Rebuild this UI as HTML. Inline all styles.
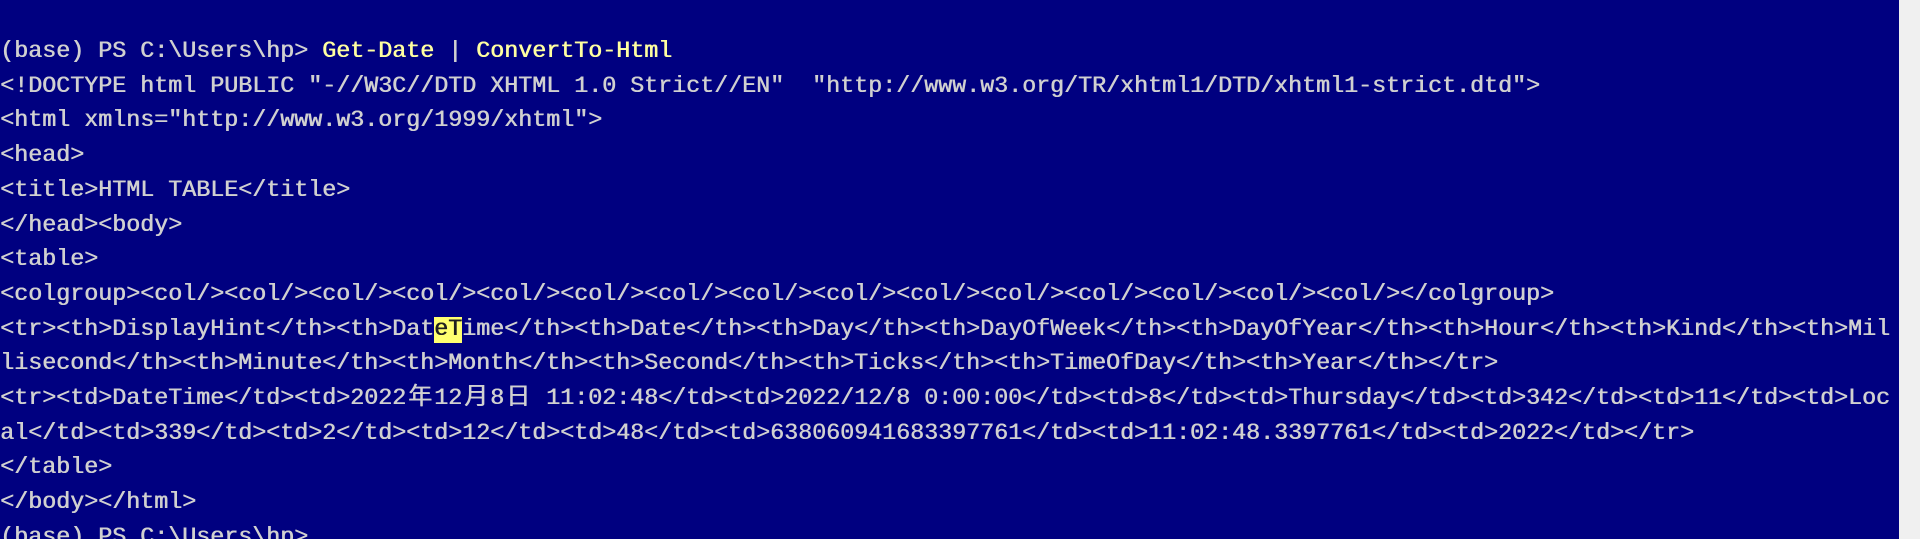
<!DOCTYPE html>
<html><head><meta charset="utf-8"><style>
html,body{margin:0;padding:0;width:1920px;height:539px;overflow:hidden;background:#f0f0f0}
#t{position:absolute;left:0;top:0;width:1899px;height:539px;background:#000080;overflow:hidden}
pre{margin:0;position:absolute;left:0;top:35px;font-family:"Liberation Mono","Noto Sans CJK SC",monospace;font-size:23.33px;line-height:34.7px;color:#d0d0d0;white-space:pre;text-shadow:0.6px 0 0 currentColor}
.y{color:#ffffa0}
.c{display:inline-block;width:28px;font-family:"Noto Sans CJK SC",sans-serif;font-size:24px;text-align:center;line-height:20px}
.h{background:#ffff70;color:#202020}
</style></head><body><div id="t"><pre>(base) PS C:\Users\hp&gt; <span class="y">Get-Date</span> | <span class="y">ConvertTo-Html</span>
&lt;!DOCTYPE html PUBLIC "-//W3C//DTD XHTML 1.0 Strict//EN"  "http://www.w3.org/TR/xhtml1/DTD/xhtml1-strict.dtd"&gt;
&lt;html xmlns="http://www.w3.org/1999/xhtml"&gt;
&lt;head&gt;
&lt;title&gt;HTML TABLE&lt;/title&gt;
&lt;/head&gt;&lt;body&gt;
&lt;table&gt;
&lt;colgroup&gt;&lt;col/&gt;&lt;col/&gt;&lt;col/&gt;&lt;col/&gt;&lt;col/&gt;&lt;col/&gt;&lt;col/&gt;&lt;col/&gt;&lt;col/&gt;&lt;col/&gt;&lt;col/&gt;&lt;col/&gt;&lt;col/&gt;&lt;col/&gt;&lt;col/&gt;&lt;/colgroup&gt;
&lt;tr&gt;&lt;th&gt;DisplayHint&lt;/th&gt;&lt;th&gt;Dat<span class="h">eT</span>ime&lt;/th&gt;&lt;th&gt;Date&lt;/th&gt;&lt;th&gt;Day&lt;/th&gt;&lt;th&gt;DayOfWeek&lt;/th&gt;&lt;th&gt;DayOfYear&lt;/th&gt;&lt;th&gt;Hour&lt;/th&gt;&lt;th&gt;Kind&lt;/th&gt;&lt;th&gt;Mil
lisecond&lt;/th&gt;&lt;th&gt;Minute&lt;/th&gt;&lt;th&gt;Month&lt;/th&gt;&lt;th&gt;Second&lt;/th&gt;&lt;th&gt;Ticks&lt;/th&gt;&lt;th&gt;TimeOfDay&lt;/th&gt;&lt;th&gt;Year&lt;/th&gt;&lt;/tr&gt;
&lt;tr&gt;&lt;td&gt;DateTime&lt;/td&gt;&lt;td&gt;2022<span class="c">年</span>12<span class="c">月</span>8<span class="c">日</span> 11:02:48&lt;/td&gt;&lt;td&gt;2022/12/8 0:00:00&lt;/td&gt;&lt;td&gt;8&lt;/td&gt;&lt;td&gt;Thursday&lt;/td&gt;&lt;td&gt;342&lt;/td&gt;&lt;td&gt;11&lt;/td&gt;&lt;td&gt;Loc
al&lt;/td&gt;&lt;td&gt;339&lt;/td&gt;&lt;td&gt;2&lt;/td&gt;&lt;td&gt;12&lt;/td&gt;&lt;td&gt;48&lt;/td&gt;&lt;td&gt;638060941683397761&lt;/td&gt;&lt;td&gt;11:02:48.3397761&lt;/td&gt;&lt;td&gt;2022&lt;/td&gt;&lt;/tr&gt;
&lt;/table&gt;
&lt;/body&gt;&lt;/html&gt;
(base) PS C:\Users\hp&gt;</pre></div></body></html>
